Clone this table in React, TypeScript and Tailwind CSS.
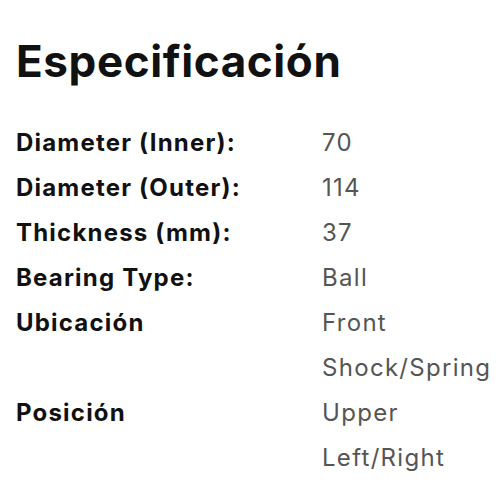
import React from "react";

const rows: [string, string][] = [
  ["Diameter (Inner):", "70"],
  ["Diameter (Outer):", "114"],
  ["Thickness (mm):", "37"],
  ["Bearing Type:", "Ball"],
  ["Ubicación", "Front Shock/Spring"],
  ["Posición", "Upper Left/Right"],
];

export default function App() {
  return (
    <div className="w-[500px] h-[500px] bg-white pl-4 pt-[35px]" style={{ fontFamily: "Inter, 'Noto Sans', sans-serif" }}>
      <h1 className="text-[44px] font-bold text-[#111] leading-[53px] tracking-[0.6px] mb-[32px]">Especificación</h1>
      <div className="grid grid-cols-[306px_178px] text-[24px] leading-[45px]">
        {rows.map(([k, v]) => (
          <React.Fragment key={k}>
            <div className="font-bold text-[#111] tracking-[1.2px]">{k}</div>
            <div className="text-[#555] tracking-[1.3px]">{v}</div>
          </React.Fragment>
        ))}
      </div>
    </div>
  );
}
